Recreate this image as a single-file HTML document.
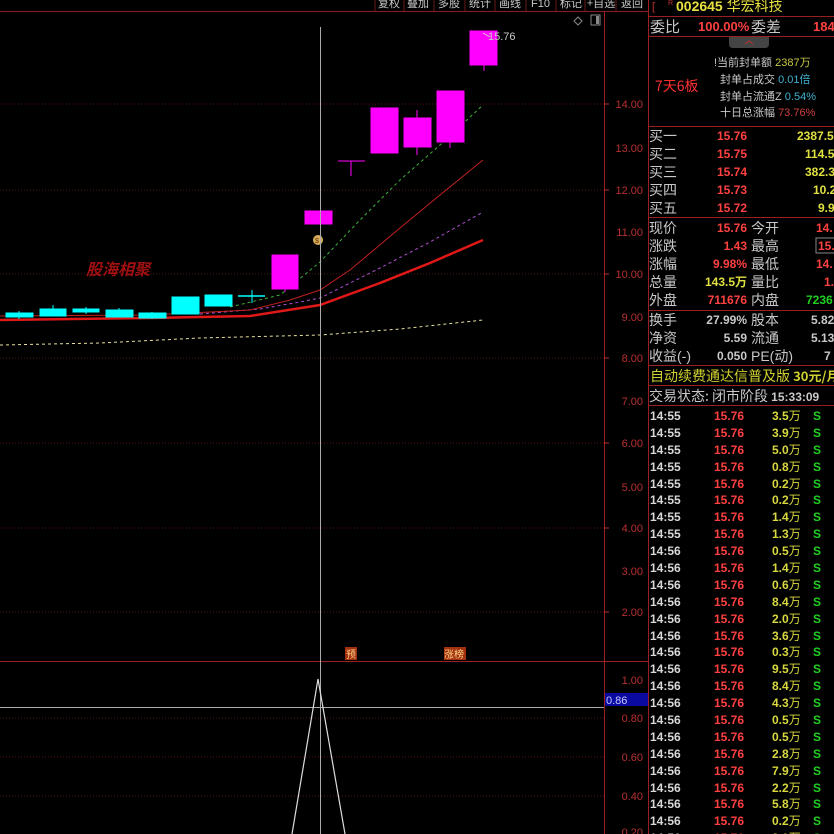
<!DOCTYPE html>
<html><head><meta charset="utf-8"><style>
html,body{margin:0;padding:0;background:#000;width:834px;height:834px;overflow:hidden}
svg{display:block}
text{font-family:"Liberation Sans","Noto Sans CJK SC",sans-serif}
.cn{font-family:"Noto Sans CJK SC","WenQuanYi Zen Hei",sans-serif}
</style></head><body>
<svg width="834" height="834" viewBox="0 0 834 834" xmlns="http://www.w3.org/2000/svg">
<rect width="834" height="834" fill="#000"/>
<!-- toolbar -->
<g class="cn" font-size="11" fill="#c8c8c8">
<text x="378" y="7" class="cn">复权</text><text x="407" y="7" class="cn">叠加</text><text x="438" y="7" class="cn">多股</text><text x="469" y="7" class="cn">统计</text><text x="499" y="7" class="cn">画线</text><text x="531" y="7">F10</text><text x="560" y="7" class="cn">标记</text><text x="587" y="7" class="cn">+自选</text><text x="621" y="7" class="cn">返回</text>
</g>
<g stroke="#6a1a1a" stroke-width="1"><line x1="375" y1="0" x2="375" y2="11"/><line x1="404" y1="0" x2="404" y2="11"/><line x1="434" y1="0" x2="434" y2="11"/><line x1="465" y1="0" x2="465" y2="11"/><line x1="495" y1="0" x2="495" y2="11"/><line x1="526" y1="0" x2="526" y2="11"/><line x1="556" y1="0" x2="556" y2="11"/><line x1="585" y1="0" x2="585" y2="11"/><line x1="616" y1="0" x2="616" y2="11"/></g>
<line x1="0" y1="11.5" x2="648" y2="11.5" stroke="#8a1e24"/>
<!-- grid -->
<g stroke="#5a1515" stroke-dasharray="1,2"><line x1="0" y1="104" x2="604" y2="104"/><line x1="0" y1="190" x2="604" y2="190"/><line x1="0" y1="274" x2="604" y2="274"/><line x1="0" y1="358" x2="604" y2="358"/><line x1="0" y1="443" x2="604" y2="443"/><line x1="0" y1="528" x2="604" y2="528"/><line x1="0" y1="612" x2="604" y2="612"/><line x1="0" y1="718" x2="604" y2="718"/><line x1="0" y1="757" x2="604" y2="757"/><line x1="0" y1="796" x2="604" y2="796"/></g>
<!-- borders -->
<line x1="604.5" y1="12" x2="604.5" y2="834" stroke="#9a2020"/>
<line x1="648.5" y1="0" x2="648.5" y2="834" stroke="#9a2020"/>
<line x1="0" y1="661.5" x2="648" y2="661.5" stroke="#9a2020"/>
<!-- axis labels -->
<g font-size="11" fill="#b83030" text-anchor="end">
<text x="643" y="108">14.00</text><text x="643" y="152">13.00</text><text x="643" y="194">12.00</text><text x="643" y="236">11.00</text><text x="643" y="278">10.00</text><text x="643" y="321">9.00</text><text x="643" y="362">8.00</text><text x="643" y="405">7.00</text><text x="643" y="447">6.00</text><text x="643" y="491">5.00</text><text x="643" y="532">4.00</text><text x="643" y="575">3.00</text><text x="643" y="616">2.00</text>
<text x="643" y="684">1.00</text><text x="643" y="722">0.80</text><text x="643" y="761">0.60</text><text x="643" y="800">0.40</text><text x="643" y="836">0.20</text>
</g>
<g stroke="#b83030"><line x1="604" y1="104" x2="609" y2="104"/><line x1="604" y1="190" x2="609" y2="190"/><line x1="604" y1="274" x2="609" y2="274"/><line x1="604" y1="358" x2="609" y2="358"/><line x1="604" y1="443" x2="609" y2="443"/><line x1="604" y1="528" x2="609" y2="528"/><line x1="604" y1="612" x2="609" y2="612"/></g>
<rect x="605" y="693" width="43" height="13" fill="#0a0aa0"/><text x="606" y="704" font-size="11" fill="#c8c8ff">0.86</text>
<!-- icons top right -->
<path d="M578 17 l4 4 l-4 4 l-4 -4 z" fill="none" stroke="#888"/>
<rect x="591" y="15" width="9" height="10" fill="none" stroke="#888"/><rect x="596" y="16" width="3" height="8" fill="#888"/>
<!-- moving averages -->
<polyline points="0,345 100,343 200,338 320,335 400,329 483,320" fill="none" stroke="#e8e0a0" stroke-width="1" stroke-dasharray="3,3"/>
<polyline points="0,320 150,318 250,316 320,305 380,283 430,263 483,240" fill="none" stroke="#e01818" stroke-width="2.5"/>
<polyline points="200,314 260,309 300,302 320,298 380,268 430,242 483,212" fill="none" stroke="#b050d0" stroke-width="1" stroke-dasharray="3,3"/>
<polyline points="0,316 150,315 250,310 290,300 320,290 350,270 400,228 440,195 483,160" fill="none" stroke="#c02020" stroke-width="1"/>
<polyline points="230,307 280,295 320,262 360,220 400,180 440,145 483,105" fill="none" stroke="#40b040" stroke-width="1" stroke-dasharray="3,3"/>
<!-- candles cyan -->
<g fill="#00ffff" stroke="#00ffff">
<rect x="6" y="313" width="27" height="4"/><line x1="19" y1="311" x2="19" y2="319"/>
<rect x="40" y="309" width="26" height="7"/><line x1="53" y1="305" x2="53" y2="316"/>
<rect x="73" y="309" width="26" height="3"/><line x1="86" y1="307" x2="86" y2="314"/>
<rect x="106" y="310" width="27" height="7"/><line x1="119" y1="308" x2="119" y2="317"/>
<rect x="139" y="313" width="27" height="5"/><line x1="152" y1="312" x2="152" y2="319"/>
<rect x="172" y="297" width="27" height="17"/>
<rect x="205" y="295" width="27" height="11"/>
<line x1="238" y1="296" x2="265" y2="296" stroke-width="1.5"/><line x1="252" y1="290" x2="252" y2="303"/>
</g>
<!-- candles magenta -->
<g fill="#ff00ff" stroke="#ff00ff">
<rect x="272" y="255" width="26" height="34"/><line x1="285" y1="289" x2="285" y2="292"/>
<rect x="305" y="211" width="27" height="13"/>
<line x1="338" y1="161" x2="365" y2="161"/><line x1="351" y1="161" x2="351" y2="176"/>
<rect x="371" y="108" width="27" height="45"/>
<rect x="404" y="118" width="27" height="29"/><line x1="417" y1="110" x2="417" y2="155"/>
<rect x="437" y="91" width="27" height="51"/><line x1="450" y1="142" x2="450" y2="148"/>
<rect x="470" y="31" width="27" height="34"/><line x1="484" y1="65" x2="484" y2="71"/>
</g>
<text x="488" y="40" font-size="11" fill="#c8c8c8">15.76</text>
<line x1="483" y1="33" x2="490" y2="37" stroke="#ccc"/>
<circle cx="318" cy="240" r="5" fill="#d8b060"/><text x="315" y="243" font-size="7" fill="#603000">$</text>
<text x="86" y="275" font-size="16" fill="#a01010" font-style="italic" class="cn" font-weight="bold">股海相聚</text>
<!-- vertical cursor -->
<line x1="320.5" y1="27" x2="320.5" y2="834" stroke="#aaa"/>
<line x1="0" y1="707.5" x2="604" y2="707.5" stroke="#aaa"/>
<polyline points="292,834 318,679 345,834" fill="none" stroke="#ddd" stroke-width="1.2"/>
<!-- labels -->
<rect x="345" y="647" width="12" height="13" fill="#a03010"/><text x="346" y="658" font-size="10" fill="#ffd080" class="cn">预</text>
<rect x="444" y="647" width="22" height="13" fill="#a03010"/><text x="444" y="658" font-size="10" fill="#ffd080" class="cn">涨榜</text>

<!-- right panel -->
<text x="652" y="10" font-size="11" fill="#c03030">[</text><text x="668" y="5" font-size="7" fill="#c03030">R</text>
<text x="676" y="11" font-size="14" fill="#e8e040" font-weight="bold">002645 <tspan class="cn" font-weight="normal">华宏科技</tspan></text>
<line x1="648" y1="16.5" x2="834" y2="16.5" stroke="#9a2020"/>
<text x="650" y="32" font-size="15" fill="#c8c8c8" class="cn">委比</text>
<text x="698" y="31" font-size="13" fill="#ff4040" font-weight="bold">100.00%</text>
<text x="751" y="32" font-size="15" fill="#c8c8c8" class="cn">委差</text>
<text x="813" y="31" font-size="13" fill="#ff4040" font-weight="bold">184</text>
<line x1="648" y1="36.5" x2="834" y2="36.5" stroke="#9a2020"/>
<path d="M729 37 h40 v7 q0 4 -4 4 h-32 q-4 0 -4 -4z" fill="#444"/>
<path d="M745 44 l4 -3 l4 3" fill="none" stroke="#c03030"/>
<text x="655" y="91" font-size="14" fill="#ff3030" class="cn">7天6板</text>
<g font-size="11" class="cn">
<text x="714" y="66" fill="#c8c8c8">!当前封单额 <tspan fill="#c8c848">2387万</tspan></text>
<text x="720" y="83" fill="#c8c8c8">封单占成交 <tspan fill="#40b0d0">0.01倍</tspan></text>
<text x="720" y="100" fill="#c8c8c8">封单占流通Z <tspan fill="#40b0d0">0.54%</tspan></text>
<text x="720" y="116" fill="#c8c8c8">十日总涨幅 <tspan fill="#d04040">73.76%</tspan></text>
</g>
<line x1="648" y1="126.5" x2="834" y2="126.5" stroke="#9a2020"/>
<g font-size="14" fill="#c8c8c8" class="cn">
<text x="649" y="141">买一</text><text x="649" y="159">买二</text><text x="649" y="177">买三</text><text x="649" y="195">买四</text><text x="649" y="213">买五</text>
</g>
<g font-size="12" font-weight="bold" text-anchor="end">
<text x="747" y="140" fill="#ff4040">15.76</text><text x="747" y="158" fill="#ff4040">15.75</text><text x="747" y="176" fill="#ff4040">15.74</text><text x="747" y="194" fill="#ff4040">15.73</text><text x="747" y="212" fill="#ff4040">15.72</text>
</g>
<g font-size="12" font-weight="bold" fill="#e0e040">
<text x="797" y="140">2387.5</text><text x="805" y="158">114.5</text><text x="805" y="176">382.3</text><text x="813" y="194">10.2</text><text x="818" y="212">9.9</text>
</g>
<line x1="648" y1="217.5" x2="834" y2="217.5" stroke="#9a2020"/>
<g font-size="14" fill="#c8c8c8" class="cn">
<text x="649" y="233">现价</text><text x="649" y="251">涨跌</text><text x="649" y="269">涨幅</text><text x="649" y="287">总量</text><text x="649" y="305">外盘</text>
<text x="751" y="233">今开</text><text x="751" y="251">最高</text><text x="751" y="269">最低</text><text x="751" y="287">量比</text><text x="751" y="305">内盘</text>
</g>
<g font-size="12" font-weight="bold" text-anchor="end">
<text x="747" y="232" fill="#ff4040">15.76</text><text x="747" y="250" fill="#ff4040">1.43</text><text x="747" y="268" fill="#ff4040">9.98%</text><text x="747" y="286" fill="#e0e040">143.5万</text><text x="747" y="304" fill="#ff4040">711676</text>
</g>
<g font-size="12" font-weight="bold">
<text x="816" y="232" fill="#ff4040">14.</text><text x="818" y="250" fill="#ff4040">15.</text><text x="816" y="268" fill="#ff4040">14.</text><text x="824" y="286" fill="#ff4040">1.</text><text x="806" y="304" fill="#20d020">7236</text>
</g>
<rect x="816" y="238" width="20" height="15" fill="none" stroke="#888"/>
<line x1="648" y1="310.5" x2="834" y2="310.5" stroke="#9a2020"/>
<g font-size="14" fill="#c8c8c8" class="cn">
<text x="649" y="325">换手</text><text x="649" y="343">净资</text><text x="649" y="361">收益(-)</text>
<text x="751" y="325">股本</text><text x="751" y="343">流通</text><text x="751" y="361">PE(动)</text>
</g>
<g font-size="12" font-weight="bold" fill="#c8c8c8">
<text x="747" y="324" text-anchor="end">27.99%</text><text x="747" y="342" text-anchor="end">5.59</text><text x="747" y="360" text-anchor="end">0.050</text>
<text x="811" y="324">5.82</text><text x="811" y="342">5.13</text><text x="824" y="360">7</text>
</g>
<line x1="648" y1="365.5" x2="834" y2="365.5" stroke="#9a2020"/>
<text x="650" y="381" font-size="14" fill="#d0d030" class="cn">自动续费通达信普及版 <tspan font-size="13" font-weight="bold">30元/月</tspan></text>
<line x1="648" y1="385.5" x2="834" y2="385.5" stroke="#9a2020"/>
<text x="649" y="401" font-size="14" fill="#c8c8c8" class="cn">交易状态: 闭市阶段 <tspan font-size="12" font-weight="bold" font-family="Liberation Sans">15:33:09</tspan></text>
<line x1="648" y1="405.5" x2="834" y2="405.5" stroke="#9a2020"/>
<g font-size="12" font-weight="bold">
<text x="650" y="420" fill="#d8d8d8">14:55</text><text x="714" y="420" fill="#ff4040">15.76</text><text x="772" y="420" fill="#d8d840">3.5<tspan class="cn" font-weight="normal">万</tspan></text><text x="813" y="420" fill="#20d020">S</text>
<text x="650" y="437" fill="#d8d8d8">14:55</text><text x="714" y="437" fill="#ff4040">15.76</text><text x="772" y="437" fill="#d8d840">3.9<tspan class="cn" font-weight="normal">万</tspan></text><text x="813" y="437" fill="#20d020">S</text>
<text x="650" y="454" fill="#d8d8d8">14:55</text><text x="714" y="454" fill="#ff4040">15.76</text><text x="772" y="454" fill="#d8d840">5.0<tspan class="cn" font-weight="normal">万</tspan></text><text x="813" y="454" fill="#20d020">S</text>
<text x="650" y="471" fill="#d8d8d8">14:55</text><text x="714" y="471" fill="#ff4040">15.76</text><text x="772" y="471" fill="#d8d840">0.8<tspan class="cn" font-weight="normal">万</tspan></text><text x="813" y="471" fill="#20d020">S</text>
<text x="650" y="488" fill="#d8d8d8">14:55</text><text x="714" y="488" fill="#ff4040">15.76</text><text x="772" y="488" fill="#d8d840">0.2<tspan class="cn" font-weight="normal">万</tspan></text><text x="813" y="488" fill="#20d020">S</text>
<text x="650" y="504" fill="#d8d8d8">14:55</text><text x="714" y="504" fill="#ff4040">15.76</text><text x="772" y="504" fill="#d8d840">0.2<tspan class="cn" font-weight="normal">万</tspan></text><text x="813" y="504" fill="#20d020">S</text>
<text x="650" y="521" fill="#d8d8d8">14:55</text><text x="714" y="521" fill="#ff4040">15.76</text><text x="772" y="521" fill="#d8d840">1.4<tspan class="cn" font-weight="normal">万</tspan></text><text x="813" y="521" fill="#20d020">S</text>
<text x="650" y="538" fill="#d8d8d8">14:55</text><text x="714" y="538" fill="#ff4040">15.76</text><text x="772" y="538" fill="#d8d840">1.3<tspan class="cn" font-weight="normal">万</tspan></text><text x="813" y="538" fill="#20d020">S</text>
<text x="650" y="555" fill="#d8d8d8">14:56</text><text x="714" y="555" fill="#ff4040">15.76</text><text x="772" y="555" fill="#d8d840">0.5<tspan class="cn" font-weight="normal">万</tspan></text><text x="813" y="555" fill="#20d020">S</text>
<text x="650" y="572" fill="#d8d8d8">14:56</text><text x="714" y="572" fill="#ff4040">15.76</text><text x="772" y="572" fill="#d8d840">1.4<tspan class="cn" font-weight="normal">万</tspan></text><text x="813" y="572" fill="#20d020">S</text>
<text x="650" y="589" fill="#d8d8d8">14:56</text><text x="714" y="589" fill="#ff4040">15.76</text><text x="772" y="589" fill="#d8d840">0.6<tspan class="cn" font-weight="normal">万</tspan></text><text x="813" y="589" fill="#20d020">S</text>
<text x="650" y="606" fill="#d8d8d8">14:56</text><text x="714" y="606" fill="#ff4040">15.76</text><text x="772" y="606" fill="#d8d840">8.4<tspan class="cn" font-weight="normal">万</tspan></text><text x="813" y="606" fill="#20d020">S</text>
<text x="650" y="623" fill="#d8d8d8">14:56</text><text x="714" y="623" fill="#ff4040">15.76</text><text x="772" y="623" fill="#d8d840">2.0<tspan class="cn" font-weight="normal">万</tspan></text><text x="813" y="623" fill="#20d020">S</text>
<text x="650" y="640" fill="#d8d8d8">14:56</text><text x="714" y="640" fill="#ff4040">15.76</text><text x="772" y="640" fill="#d8d840">3.6<tspan class="cn" font-weight="normal">万</tspan></text><text x="813" y="640" fill="#20d020">S</text>
<text x="650" y="656" fill="#d8d8d8">14:56</text><text x="714" y="656" fill="#ff4040">15.76</text><text x="772" y="656" fill="#d8d840">0.3<tspan class="cn" font-weight="normal">万</tspan></text><text x="813" y="656" fill="#20d020">S</text>
<text x="650" y="673" fill="#d8d8d8">14:56</text><text x="714" y="673" fill="#ff4040">15.76</text><text x="772" y="673" fill="#d8d840">9.5<tspan class="cn" font-weight="normal">万</tspan></text><text x="813" y="673" fill="#20d020">S</text>
<text x="650" y="690" fill="#d8d8d8">14:56</text><text x="714" y="690" fill="#ff4040">15.76</text><text x="772" y="690" fill="#d8d840">8.4<tspan class="cn" font-weight="normal">万</tspan></text><text x="813" y="690" fill="#20d020">S</text>
<text x="650" y="707" fill="#d8d8d8">14:56</text><text x="714" y="707" fill="#ff4040">15.76</text><text x="772" y="707" fill="#d8d840">4.3<tspan class="cn" font-weight="normal">万</tspan></text><text x="813" y="707" fill="#20d020">S</text>
<text x="650" y="724" fill="#d8d8d8">14:56</text><text x="714" y="724" fill="#ff4040">15.76</text><text x="772" y="724" fill="#d8d840">0.5<tspan class="cn" font-weight="normal">万</tspan></text><text x="813" y="724" fill="#20d020">S</text>
<text x="650" y="741" fill="#d8d8d8">14:56</text><text x="714" y="741" fill="#ff4040">15.76</text><text x="772" y="741" fill="#d8d840">0.5<tspan class="cn" font-weight="normal">万</tspan></text><text x="813" y="741" fill="#20d020">S</text>
<text x="650" y="758" fill="#d8d8d8">14:56</text><text x="714" y="758" fill="#ff4040">15.76</text><text x="772" y="758" fill="#d8d840">2.8<tspan class="cn" font-weight="normal">万</tspan></text><text x="813" y="758" fill="#20d020">S</text>
<text x="650" y="775" fill="#d8d8d8">14:56</text><text x="714" y="775" fill="#ff4040">15.76</text><text x="772" y="775" fill="#d8d840">7.9<tspan class="cn" font-weight="normal">万</tspan></text><text x="813" y="775" fill="#20d020">S</text>
<text x="650" y="792" fill="#d8d8d8">14:56</text><text x="714" y="792" fill="#ff4040">15.76</text><text x="772" y="792" fill="#d8d840">2.2<tspan class="cn" font-weight="normal">万</tspan></text><text x="813" y="792" fill="#20d020">S</text>
<text x="650" y="808" fill="#d8d8d8">14:56</text><text x="714" y="808" fill="#ff4040">15.76</text><text x="772" y="808" fill="#d8d840">5.8<tspan class="cn" font-weight="normal">万</tspan></text><text x="813" y="808" fill="#20d020">S</text>
<text x="650" y="825" fill="#d8d8d8">14:56</text><text x="714" y="825" fill="#ff4040">15.76</text><text x="772" y="825" fill="#d8d840">0.2<tspan class="cn" font-weight="normal">万</tspan></text><text x="813" y="825" fill="#20d020">S</text>
<text x="650" y="842" fill="#d8d8d8">14:56</text><text x="714" y="842" fill="#ff4040">15.76</text><text x="772" y="842" fill="#d8d840">3.0<tspan class="cn" font-weight="normal">万</tspan></text><text x="813" y="842" fill="#20d020">S</text>
</g>
</svg>
</body></html>
